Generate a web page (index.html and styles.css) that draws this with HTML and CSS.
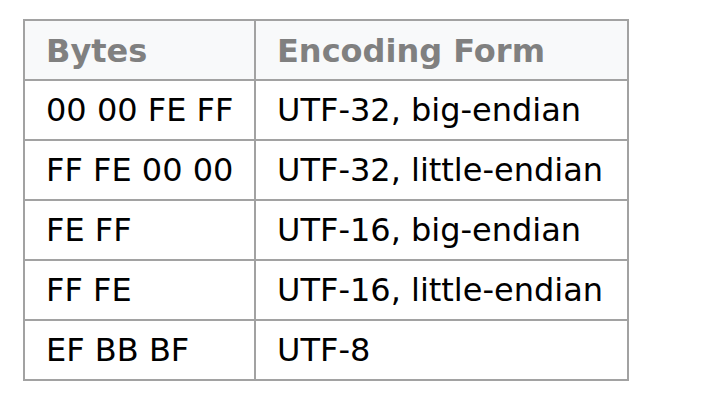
FILE: index.html
```html
<!DOCTYPE html>
<html>
<head>
<meta charset="utf-8">
<link rel="stylesheet" href="styles.css">
</head>
<body>
<div class="bom-table" role="table">
  <div class="cell head" role="columnheader">Bytes</div>
  <div class="cell head" role="columnheader">Encoding Form</div>
  <div class="cell">00 00 FE FF</div>
  <div class="cell">UTF-32, big-endian</div>
  <div class="cell">FF FE 00 00</div>
  <div class="cell">UTF-32, little-endian</div>
  <div class="cell">FE FF</div>
  <div class="cell">UTF-16, big-endian</div>
  <div class="cell">FF FE</div>
  <div class="cell">UTF-16, little-endian</div>
  <div class="cell">EF BB BF</div>
  <div class="cell">UTF-8</div>
</div>
</body>
</html>
```
FILE: styles.css
```css
html, body {
  margin: 0;
  background: #ffffff;
}
body {
  padding: 19px 0 0 23px;
  font-family: "DejaVu Sans", Verdana, sans-serif;
}
.bom-table {
  display: inline-grid;
  grid-template-columns: 229px 371px;
  grid-auto-rows: 58px;
  gap: 2px;
  padding: 2px;
  background: #a2a2a2;
}
.cell {
  background: #ffffff;
  color: #000000;
  font-size: 32px;
  line-height: 37px;
  padding: 11px 21px 0;
  white-space: nowrap;
}
.cell.head {
  background: #f8f9fa;
  color: #808080;
  font-weight: bold;
  padding-top: 12px;
}
```
